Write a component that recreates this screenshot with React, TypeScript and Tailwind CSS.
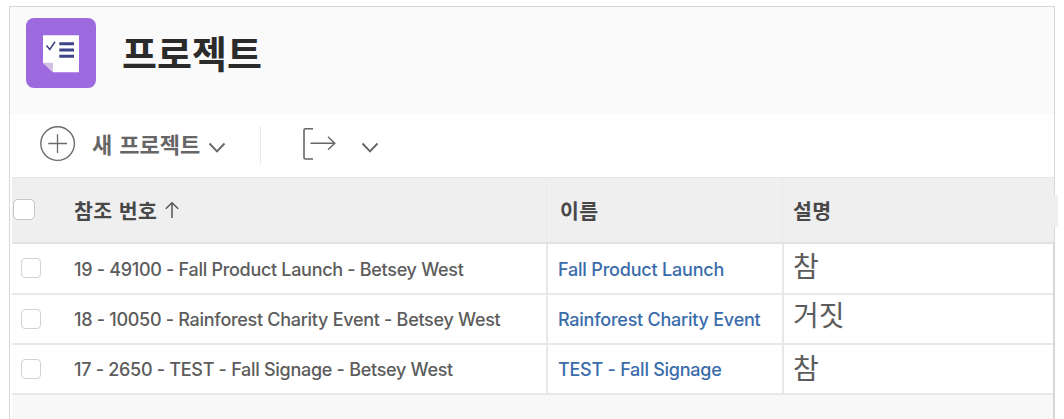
import React from "react";

type Row = {
  reference: string;
  name: string;
  description: string;
  height: string;
  refSpacing: string;
  nameSpacing: string;
  descPadding: string;
  checkboxMargin: string;
};

const rows: Row[] = [
  {
    reference: "19 - 49100 - Fall Product Launch - Betsey West",
    name: "Fall Product Launch",
    description: "참",
    height: "h-[51px]",
    refSpacing: "tracking-[-0.3px]",
    nameSpacing: "tracking-[-0.2px]",
    descPadding: "pb-[8px]",
    checkboxMargin: "mb-[2px]",
  },
  {
    reference: "18 - 10050 - Rainforest Charity Event - Betsey West",
    name: "Rainforest Charity Event",
    description: "거짓",
    height: "h-[50px]",
    refSpacing: "tracking-[-0.29px]",
    nameSpacing: "tracking-[-0.24px]",
    descPadding: "pb-[10px]",
    checkboxMargin: "mb-0",
  },
  {
    reference: "17 - 2650 - TEST - Fall Signage - Betsey West",
    name: "TEST - Fall Signage",
    description: "참",
    height: "h-[50px]",
    refSpacing: "tracking-[-0.29px]",
    nameSpacing: "tracking-[-0.25px]",
    descPadding: "pb-[4px]",
    checkboxMargin: "mb-0",
  },
];

function ProjectIcon() {
  return (
    <svg width="70" height="70" viewBox="0 0 70 70" className="shrink-0">
      <rect width="70" height="70" rx="8" fill="#9d69df" />
      <path d="M17 17.2H53V54.2H27L17 44.8Z" fill="#fff" />
      <path d="M17 44.8H27V54.2Z" fill="#d4bfe3" />
      <path d="M20.5 27.5L23.8 31.5L29 23.8" fill="none" stroke="#3f4589" strokeWidth="1.6" />
      <path d="M33.3 25.7H48M33.3 32H48M33.3 38.3H48" stroke="#3f4589" strokeWidth="3" />
    </svg>
  );
}

function Chevron() {
  return (
    <svg width="18" height="12" viewBox="0 0 18 12" className="shrink-0">
      <path d="M1.5 1.5L9 9.3L16.5 1.5" fill="none" stroke="#666" strokeWidth="1.9" />
    </svg>
  );
}

function Toolbar() {
  return (
    <div className="flex h-[64px] items-center border-b border-[#e6e6e6] bg-white pl-[28px]">
      <svg width="36" height="36" viewBox="0 0 36 36" className="mb-[4px] shrink-0">
        <circle cx="17.6" cy="17.6" r="16.8" fill="none" stroke="#6b6b6b" strokeWidth="1.4" />
        <path d="M8.3 17.5H27M17.5 8.3V27" stroke="#6b6b6b" strokeWidth="1.3" />
      </svg>
      <span className="mb-[6px] ml-[16px] w-[116px] text-[22px] leading-none font-bold [word-spacing:2px] whitespace-nowrap text-[#666]">
        새 프로젝트
      </span>
      <span className="mt-[4px]"><Chevron /></span>
      <div className="mb-[2px] ml-[34px] h-[38px] w-px bg-[#e8e8e8]" />
      <svg width="34" height="34" viewBox="0 0 34 34" className="mb-[4px] ml-[41px] shrink-0">
        <path d="M11 1.7H3.5Q2 1.7 2 3.2V30.5Q2 32 3.5 32H11" fill="none" stroke="#666" strokeWidth="1.6" />
        <path d="M8.5 16.2H32.5M26 9.7L32.8 16.2L26 22.7" fill="none" stroke="#666" strokeWidth="1.4" />
      </svg>
      <span className="mt-[4px] ml-[25px]"><Chevron /></span>
    </div>
  );
}

function TableHeader() {
  return (
    <div className="relative grid h-[66px] grid-cols-[535px_236px_1fr] border-b-2 border-[#e2e2e2] bg-[#efefef] text-[20.5px] leading-none font-bold text-[#484848]">
      <div className="flex items-center border-r border-[#eaeaea]">
        <span className="mb-[2px] ml-px h-[21px] w-[22px] shrink-0 rounded-[5px] border border-[#c6c6c6] bg-white" />
        <span className="ml-[39px] tracking-[0.3px] [word-spacing:1.5px] whitespace-nowrap">참조 번호</span>
        <svg width="16" height="18" viewBox="0 0 16 18" className="mb-px ml-[7px] shrink-0">
          <path d="M8 17V2M1.8 7.7L8 1.8L14.2 7.7" fill="none" stroke="#555" strokeWidth="1.5" />
        </svg>
      </div>
      <div className="flex items-center border-r border-[#eaeaea] pl-[13px] tracking-[0.5px]">이름</div>
      <div className="flex items-center pl-[10px] tracking-[0.5px]">설명</div>
      <div className="absolute top-[17px] right-[-4px] h-[32px] w-[5px] bg-[#efefef]" />
    </div>
  );
}

function TableRow({ row }: { row: Row }) {
  return (
    <div
      className={`grid grid-cols-[536px_236px_1fr] border-b-2 border-[#e8e8e8] bg-white font-['Inter','Noto_Sans_CJK_KR',sans-serif] text-[18px] leading-none font-medium ${row.height}`}
    >
      <div className="flex items-center border-r-2 border-[#e8e8e8]">
        <span
          className={`ml-[9px] h-[20px] w-[20px] shrink-0 rounded-[4px] border-[1.5px] border-[#d2d2d2] bg-white ${row.checkboxMargin}`}
        />
        <span className={`mt-[2px] ml-[33px] whitespace-nowrap text-[#5c5c5c] ${row.refSpacing}`}>
          {row.reference}
        </span>
      </div>
      <div className="flex items-center border-r-2 border-[#e8e8e8] pt-[2px] pl-[10px]">
        <a className={`whitespace-nowrap text-[#3a6cab] ${row.nameSpacing}`}>{row.name}</a>
      </div>
      <div
        className={`flex items-center pl-[9px] font-['Noto_Sans_CJK_KR',sans-serif] text-[28px] font-normal text-[#5c5c5c] ${row.descPadding}`}
      >
        {row.description}
      </div>
    </div>
  );
}

export default function App() {
  return (
    <div className="h-[419px] w-[1064px] overflow-hidden bg-white pt-[6px] pl-[9px] font-['Noto_Sans_CJK_KR',sans-serif]">
      <div className="flex h-[413px] w-[1046px] flex-col border-x border-t border-[#d6d6d6] bg-white">
        <header className="flex h-[107px] items-start bg-[#fafafa] pt-[11px] pl-[16px]">
          <ProjectIcon />
          <h1 className="mt-[15px] ml-[26px] text-[38px] leading-none font-bold whitespace-nowrap text-[#2b2b2b]">
            프로젝트
          </h1>
        </header>
        <div className="flex flex-1 flex-col pl-[2px]">
          <Toolbar />
          <TableHeader />
          <div className="flex-1 border-r border-[#d6d6d6] bg-[#f8f8f8]">
            {rows.map((row) => (
              <TableRow key={row.reference} row={row} />
            ))}
          </div>
        </div>
      </div>
    </div>
  );
}
